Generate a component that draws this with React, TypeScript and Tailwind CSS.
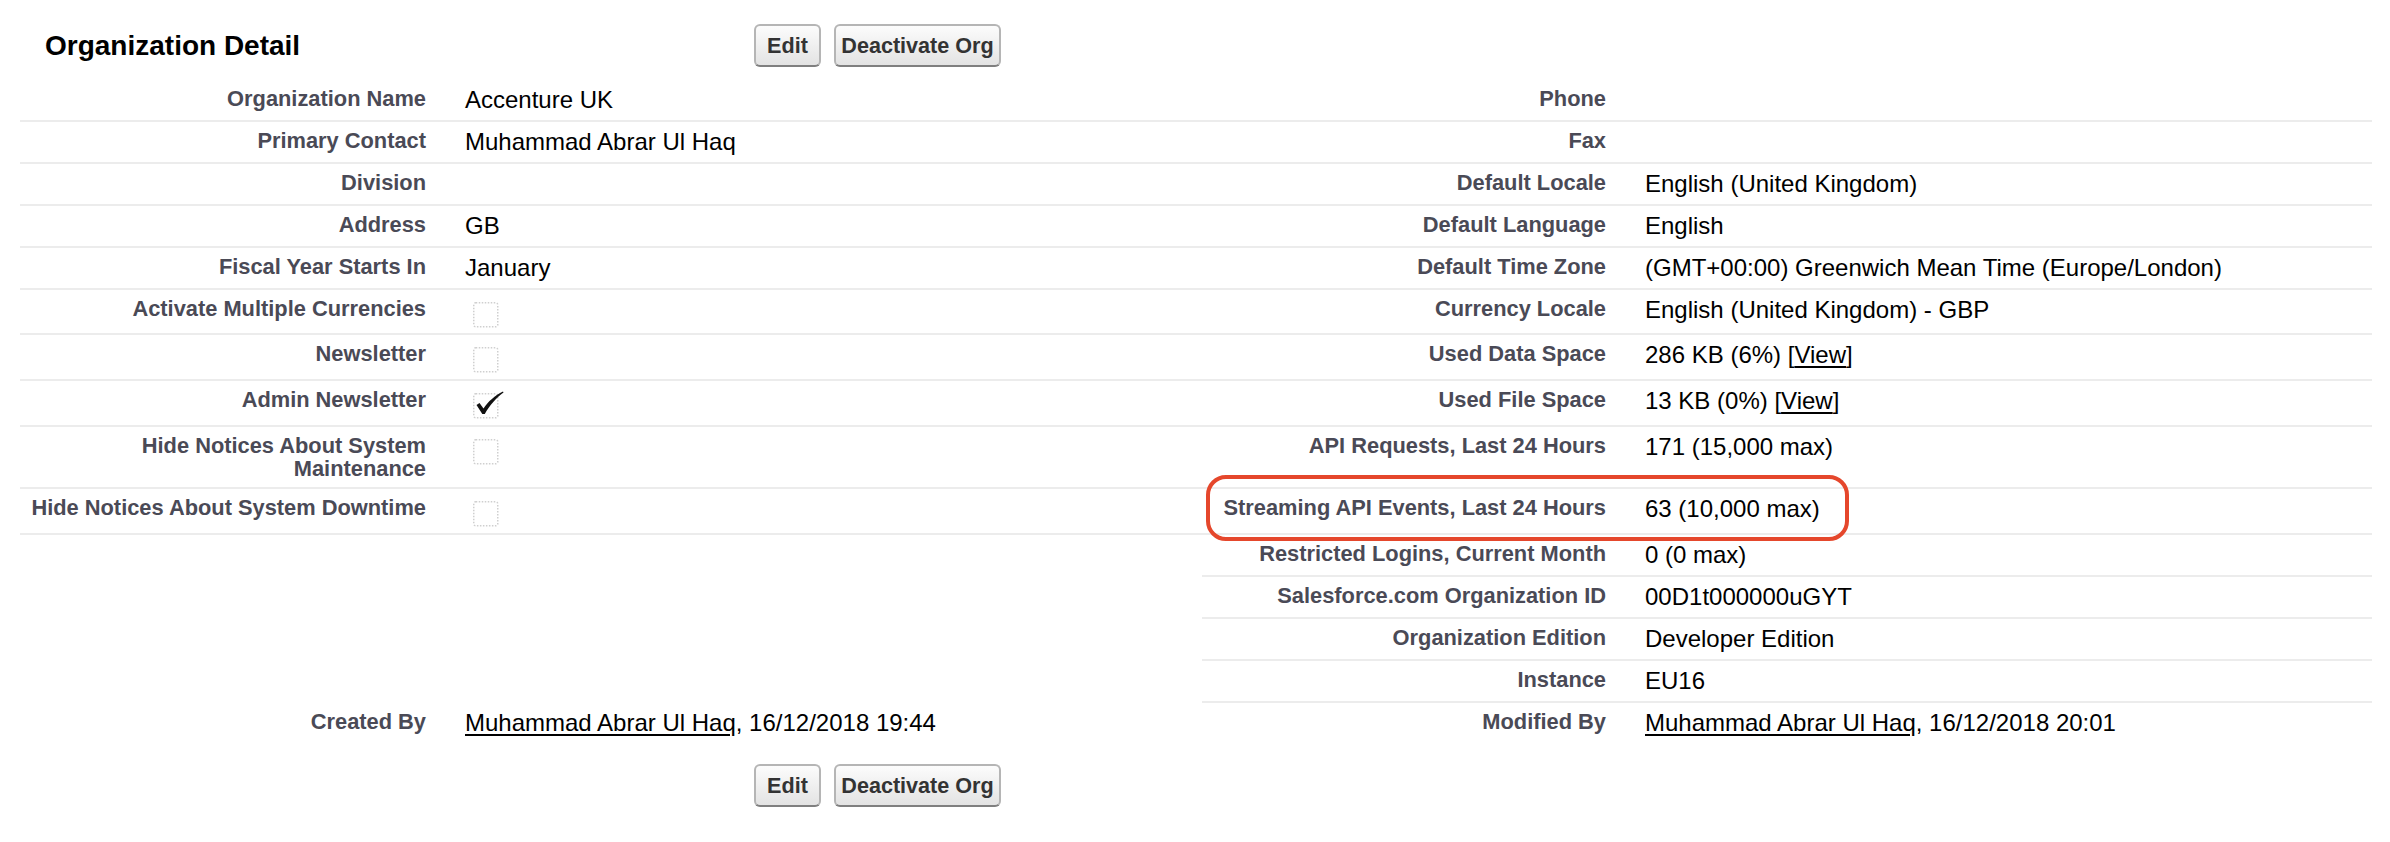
import React from "react";

type Row = {
  h: string;
  l1?: string;
  v1?: React.ReactNode;
  l2?: string;
  v2?: React.ReactNode;
  leftEmpty?: boolean;
  noBorder?: boolean;
  highlight?: boolean;
};

function CheckBox({ checked }: { checked?: boolean }) {
  return (
    <svg width="34" height="28" viewBox="0 0 34 28" className="block">
      <rect
        x="0.75"
        y="2.75"
        width="24"
        height="24"
        rx="2"
        fill="white"
        stroke="#cfcfcf"
        strokeWidth="1.5"
        strokeDasharray="1.5 1.5"
      />
      {checked && (
        <path
          d="M3.5 14 L6.5 12 L10.5 17.5 C15 10.5 22 4.5 30 0.5 L30.5 1.5 C23.5 6.5 16.5 14.5 11.8 23 L9.3 23 Z"
          fill="#111"
        />
      )}
    </svg>
  );
}

function Link({ children }: { children: React.ReactNode }) {
  return (
    <span className="underline decoration-[2px] underline-offset-[3px]">{children}</span>
  );
}

function Btn({ children, w }: { children: React.ReactNode; w: string }) {
  return (
    <button
      className={`${w} h-[43px] rounded-[6px] border-2 border-[#b5b5b5] border-b-[#7f7f7f] bg-gradient-to-b from-[#fcfcfc] to-[#e3e3e3] text-[21.6px] font-bold leading-none text-[#333] flex items-center justify-center`}
    >
      {children}
    </button>
  );
}

function Buttons() {
  return (
    <div className="flex gap-[13px]">
      <Btn w="w-[67px]">Edit</Btn>
      <Btn w="w-[167px]">Deactivate Org</Btn>
    </div>
  );
}

const cb = (checked?: boolean) => (
  <div className="pl-[8px] pt-[2px]">
    <CheckBox checked={checked} />
  </div>
);

const rows: Row[] = [
  { h: "h-[42px]", l1: "Organization Name", v1: "Accenture UK", l2: "Phone" },
  { h: "h-[42px]", l1: "Primary Contact", v1: "Muhammad Abrar Ul Haq", l2: "Fax" },
  { h: "h-[42px]", l1: "Division", l2: "Default Locale", v2: "English (United Kingdom)" },
  { h: "h-[42px]", l1: "Address", v1: "GB", l2: "Default Language", v2: "English" },
  {
    h: "h-[42px]",
    l1: "Fiscal Year Starts In",
    v1: "January",
    l2: "Default Time Zone",
    v2: "(GMT+00:00) Greenwich Mean Time (Europe/London)",
  },
  {
    h: "h-[45px]",
    l1: "Activate Multiple Currencies",
    v1: cb(false),
    l2: "Currency Locale",
    v2: "English (United Kingdom) - GBP",
  },
  {
    h: "h-[46px]",
    l1: "Newsletter",
    v1: cb(false),
    l2: "Used Data Space",
    v2: (
      <>
        286 KB (6%) [<Link>View</Link>]
      </>
    ),
  },
  {
    h: "h-[46px]",
    l1: "Admin Newsletter",
    v1: cb(true),
    l2: "Used File Space",
    v2: (
      <>
        13 KB (0%) [<Link>View</Link>]
      </>
    ),
  },
  {
    h: "h-[62px]",
    l1: "Hide Notices About System Maintenance",
    v1: cb(false),
    l2: "API Requests, Last 24 Hours",
    v2: "171 (15,000 max)",
  },
  {
    h: "h-[46px]",
    l1: "Hide Notices About System Downtime",
    v1: cb(false),
    l2: "Streaming API Events, Last 24 Hours",
    v2: "63 (10,000 max)",
    highlight: true,
  },
  { h: "h-[42px]", leftEmpty: true, l2: "Restricted Logins, Current Month", v2: "0 (0 max)" },
  { h: "h-[42px]", leftEmpty: true, l2: "Salesforce.com Organization ID", v2: "00D1t000000uGYT" },
  { h: "h-[42px]", leftEmpty: true, l2: "Organization Edition", v2: "Developer Edition" },
  { h: "h-[42px]", leftEmpty: true, l2: "Instance", v2: "EU16" },
  {
    h: "h-[42px]",
    noBorder: true,
    l1: "Created By",
    v1: (
      <>
        <Link>Muhammad Abrar Ul Haq</Link>, 16/12/2018 19:44
      </>
    ),
    l2: "Modified By",
    v2: (
      <>
        <Link>Muhammad Abrar Ul Haq</Link>, 16/12/2018 20:01
      </>
    ),
  },
];

const labelCls =
  "text-right pr-[19px] pl-[4px] pt-[7px] text-[21.84px] leading-[23px] font-bold text-[#4a4a56]";
const valueCls = "pl-[20px] pr-[4px] pt-[8px] text-[24px] leading-[24px] text-black";

export default function App() {
  return (
    <div className="w-[2390px] min-h-[842px] bg-white pl-[20px] pr-[18px] font-['Liberation_Sans',Arial,sans-serif]">
      <div className="flex items-center pt-[24px] mb-[13px]">
        <div className="w-[734px] pl-[25px]">
          <h2 className="text-[28px] font-bold text-black leading-normal">Organization Detail</h2>
        </div>
        <Buttons />
      </div>

      <div className="grid grid-cols-[425px_757px_423px_1fr]">
        {rows.map((r, i) => {
          const leftBorder = r.noBorder || r.leftEmpty ? "" : "border-b-2 border-[#ececec]";
          const rightBorder = r.noBorder ? "" : "border-b-2 border-[#ececec]";
          return (
            <React.Fragment key={i}>
              <div className={`${r.h} ${leftBorder} ${labelCls}`}>{r.l1}</div>
              <div className={`${r.h} ${leftBorder} ${valueCls}`}>{r.v1}</div>
              <div className={`${r.h} ${rightBorder} ${labelCls} relative`}>
                {r.l2}
                {r.highlight && (
                  <div className="absolute left-[4px] top-[-14px] w-[643px] h-[66px] rounded-[20px] border-[4px] border-[#e5472c] pointer-events-none" />
                )}
              </div>
              <div className={`${r.h} ${rightBorder} ${valueCls}`}>{r.v2}</div>
            </React.Fragment>
          );
        })}
      </div>

      <div className="flex mt-[19px]">
        <div className="w-[734px]" />
        <Buttons />
      </div>
    </div>
  );
}
